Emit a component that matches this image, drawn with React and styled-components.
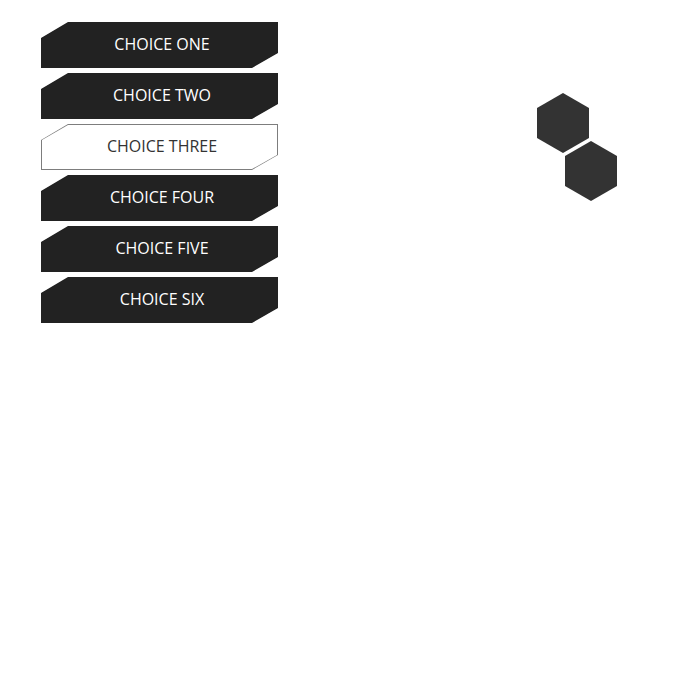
import React, { useState } from 'react';
import styled, { createGlobalStyle } from 'styled-components';

const GlobalStyle = createGlobalStyle`
  html, body {
    margin: 0;
    padding: 0;
    background: #ffffff;
  }
  body {
    font-family: "Open Sans", "Noto Sans", sans-serif;
  }
`;

const Page = styled.div`
  display: flex;
  align-items: flex-start;
  padding: 22px 0 0 41px;
  min-height: 675px;
  box-sizing: border-box;
`;

const Menu = styled.div`
  display: flex;
  flex-direction: column;
  gap: 5px;
  width: 237px;
`;

const SHAPE = 'polygon(27px 0, 100% 0, 100% 31px, 211px 100%, 0 100%, 0 16px)';

const Choice = styled.button`
  position: relative;
  width: 237px;
  height: 46px;
  border: none;
  padding: 0 0 3px 5px;
  margin: 0;
  cursor: pointer;
  clip-path: ${SHAPE};
  background: ${props => (props.active ? '#7d7d7d' : '#222222')};
  color: ${props => (props.active ? '#333333' : '#ffffff')};
  font-family: "Open Sans", "Noto Sans", sans-serif;
  font-size: 16px;
  text-align: center;

  &::before {
    content: '';
    position: absolute;
    inset: 1px;
    clip-path: polygon(26px 0, 100% 0, 100% 30px, 210px 100%, 0 100%, 0 15px);
    background: ${props => (props.active ? '#ffffff' : '#222222')};
  }

  span {
    position: relative;
  }
`;

const Hexes = styled.svg`
  margin: 71px 0 0 259px;
  flex-shrink: 0;
`;

const choices = ['CHOICE ONE', 'CHOICE TWO', 'CHOICE THREE', 'CHOICE FOUR', 'CHOICE FIVE', 'CHOICE SIX'];

const hexPoints = (cx, cy, r) =>
  [0, 1, 2, 3, 4, 5]
    .map(i => {
      const a = (Math.PI / 3) * i - Math.PI / 2;
      return `${(cx + r * Math.cos(a)).toFixed(1)},${(cy + r * Math.sin(a)).toFixed(1)}`;
    })
    .join(' ');

const App = () => {
  const [selected, setSelected] = useState(2);

  return (
    <>
      <GlobalStyle />
      <Page>
        <Menu>
          {choices.map((label, i) => (
            <Choice key={label} active={i === selected} onClick={() => setSelected(i)}>
              <span>{label}</span>
            </Choice>
          ))}
        </Menu>
        <Hexes width="81" height="109" viewBox="0 0 81 109">
          <polygon points={hexPoints(26, 30, 30)} fill="#333333" />
          <polygon points={hexPoints(54, 78, 30)} fill="#333333" />
        </Hexes>
      </Page>
    </>
  );
};

export default App;
